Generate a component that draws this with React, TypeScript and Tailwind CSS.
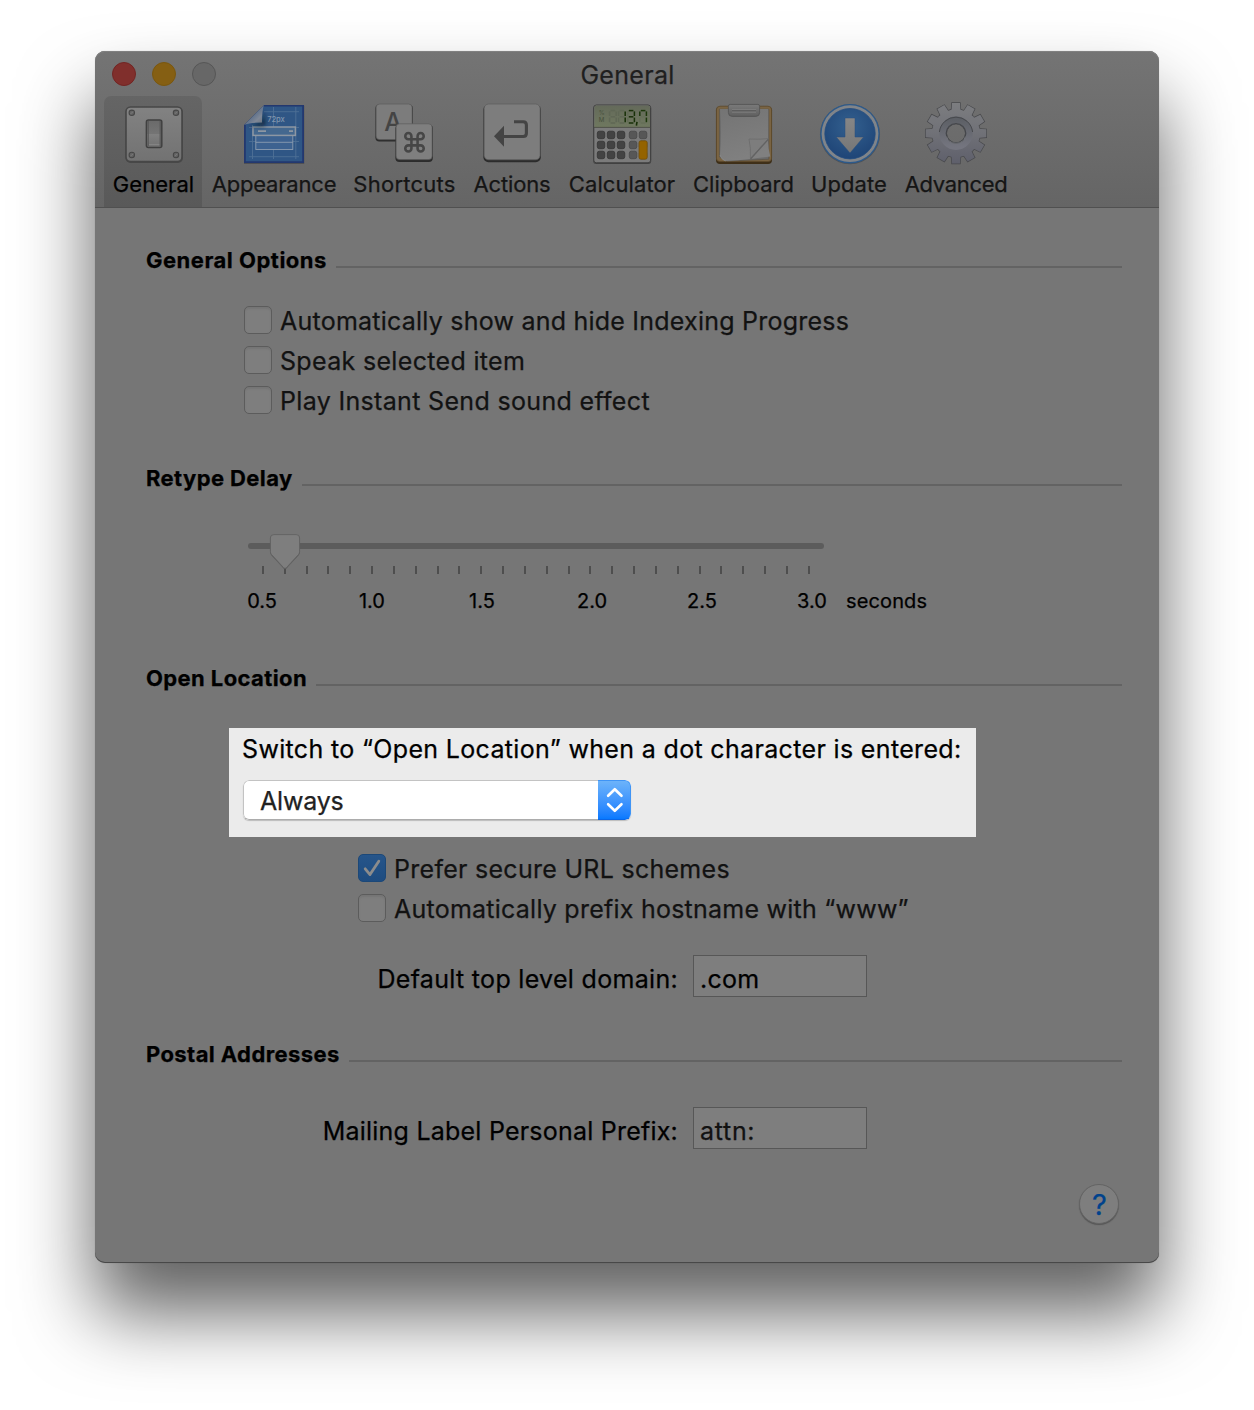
import React from "react";
import { Command } from "lucide-react";

function GeneralIcon() {
  const screws = [
    [10.8, 10.8],
    [55, 10.8],
    [10.8, 53],
    [55, 53],
  ];
  return (
    <svg width="64" height="64" viewBox="0 0 64 64">
      <defs>
        <linearGradient id="plate" x1="0" y1="0" x2="0" y2="1">
          <stop offset="0" stopColor="#828282" />
          <stop offset="1" stopColor="#727272" />
        </linearGradient>
        <linearGradient id="switchTop" x1="0" y1="0" x2="0" y2="1">
          <stop offset="0" stopColor="#6a6a6a" />
          <stop offset="0.5" stopColor="#747474" />
          <stop offset="0.52" stopColor="#808080" />
          <stop offset="1" stopColor="#707070" />
        </linearGradient>
      </defs>
      <rect x="4.5" y="5.5" width="57.5" height="55.5" rx="5" fill="#3c3c3c" opacity="0.6" />
      <rect x="5" y="5" width="56" height="54.5" rx="4.5" fill="url(#plate)" stroke="#474747" strokeWidth="1.6" />
      {screws.map(([x, y], i) => (
        <g key={i}>
          <circle cx={x} cy={y} r="2.7" fill="#646464" stroke="#474747" strokeWidth="1.1" />
          <path d={`M${x - 1.5} ${y + 1.2}L${x + 1.5} ${y - 1.2}`} stroke="#7e7e7e" strokeWidth="0.8" />
        </g>
      ))}
      <rect x="25.4" y="18" width="15.4" height="27.4" rx="2" fill="url(#switchTop)" stroke="#404040" strokeWidth="1.5" />
      <path d="M27.2 19v25M39.2 19v25" stroke="#585858" strokeWidth="1.2" />
      <path d="M28 42.6h10.4" stroke="#8a8a8a" strokeWidth="0.8" />
    </svg>
  );
}

function AppearanceIcon() {
  return (
    <svg width="64" height="64" viewBox="0 0 64 64">
      <defs>
        <linearGradient id="fold" x1="0" y1="0" x2="1" y2="1">
          <stop offset="0.35" stopColor="#4d6584" />
          <stop offset="0.7" stopColor="#7e8796" />
          <stop offset="1" stopColor="#6b727c" />
        </linearGradient>
        <filter id="foldShadow" x="-50%" y="-50%" width="200%" height="200%">
          <feGaussianBlur stdDeviation="2" />
        </filter>
        <clipPath id="sheet">
          <path d="M22 3H62V61H2V23Z" />
        </clipPath>
      </defs>
      <path d="M22 3.8H62.2V61.8H2V23Z" fill="#303238" opacity="0.6" />
      <path d="M22 3H62V61H2V23Z" fill="#23386f" />
      <path d="M22 4.6H60.2V59.2H3.8V23Z" fill="#2f5685" />
      <g stroke="#547599" strokeWidth="0.9" opacity="0.85">
        <path d="M10.5 23V57M31.5 5V57M53.8 5V57" />
        <path d="M22 9.7H57M7 25.5H57M7 39.5H57M7 54.7H57" />
      </g>
      <rect x="13.8" y="33.5" width="37" height="14" fill="#3d6290" stroke="#8a9cb0" strokeWidth="0.9" />
      <path d="M13.8 40.3H50.8" stroke="#8a9cb0" strokeWidth="0.9" />
      <rect x="11" y="25" width="42.4" height="8.4" fill="#44688f" stroke="#8d97a3" strokeWidth="1.5" />
      <path d="M16 29.2H24M47 29.2H51" stroke="#8d97a3" strokeWidth="1.8" />
      <text x="25.2" y="20.2" fontSize="7.6" fontWeight="500" fontFamily="Inter, sans-serif" fill="#8296ae" letterSpacing="-0.1">
        72px
      </text>
      <g clipPath="url(#sheet)">
        <path d="M21 8L23.5 21Q23.5 24 20 24L6 24L20 20Z" fill="#101a28" opacity="0.8" filter="url(#foldShadow)" />
      </g>
      <path d="M22 3Q20 8 20 20.5Q8 20.5 2 23Z" fill="url(#fold)" />
    </svg>
  );
}

function ShortcutsIcon() {
  return (
    <svg width="64" height="64" viewBox="0 0 64 64">
      <rect x="3.4" y="2.6" width="37.4" height="37" rx="4" fill="#2c2c2c" />
      <rect x="4.1" y="2" width="36" height="35.6" rx="3.6" fill="#7c7c7c" stroke="#5c5c5c" strokeWidth="0.7" />
      <text x="21.2" y="28.8" textAnchor="middle" fontSize="25" fontWeight="500" fontFamily="Inter, sans-serif" fill="#444">
        A
      </text>
      <rect x="23.4" y="22.6" width="37.4" height="37.4" rx="4" fill="#2c2c2c" />
      <rect x="24.1" y="21.8" width="36" height="35.8" rx="3.6" fill="#7f7f7f" stroke="#5c5c5c" strokeWidth="0.7" />
      <Command x="30.2" y="28" width="24.6" height="24.6" color="#464646" strokeWidth={2.5} />
    </svg>
  );
}

function ActionsIcon() {
  return (
    <svg width="64" height="64" viewBox="0 0 64 64">
      <rect x="3.4" y="2.8" width="57.4" height="57.4" rx="5" fill="#2c2c2c" />
      <rect x="4.1" y="2" width="56" height="55.8" rx="4.6" fill="#7d7d7d" stroke="#5c5c5c" strokeWidth="0.7" />
      <path d="M34 19.7H43.2Q46.4 19.7 46.4 23V31.2Q46.4 34.5 43.2 34.5H23" fill="none" stroke="#444" strokeWidth="3.1" />
      <path d="M14 34.3L24 23.8V44.8Z" fill="#444" />
    </svg>
  );
}

/* Segments run clockwise from the top bar, the middle bar is last. */
const SEGMENTS = [
  "M1 0H5.6",
  "M6.6 0.8V5.4",
  "M6.6 7V11.6",
  "M1 12.4H5.6",
  "M0 7V11.6",
  "M0 0.8V5.4",
  "M1 6.2H5.6",
];

function Digit({ x, on, color }: { x: number; on: number[]; color: string }) {
  return (
    <g transform={`translate(${x} 8.6)`} stroke={color} strokeWidth="1.5" fill="none">
      {on.map((s) => (
        <path key={s} d={SEGMENTS[s]} />
      ))}
    </g>
  );
}

function CalculatorIcon() {
  const rows = [29, 39, 49];
  return (
    <svg width="64" height="64" viewBox="0 0 64 64">
      <defs>
        <linearGradient id="lcd" x1="0" y1="0" x2="0" y2="1">
          <stop offset="0" stopColor="#646a5a" />
          <stop offset="1" stopColor="#6f785f" />
        </linearGradient>
      </defs>
      <rect x="3.2" y="3.4" width="58" height="58.6" rx="3" fill="#333" opacity="0.7" />
      <rect x="3.8" y="3" width="56.8" height="57.8" rx="2.6" fill="#7b7b7b" stroke="#3f3f3f" strokeWidth="1" />
      <path d="M4.4 25.2V5.6Q4.4 3.6 6.4 3.6H58Q60 3.6 60 5.6V25.2Z" fill="url(#lcd)" />
      <path d="M4 25.4H60.4" stroke="#4a4d44" strokeWidth="0.9" />
      <text x="8.8" y="12.6" fontSize="6" fontFamily="Inter, sans-serif" fill="#4a5440">
        %
      </text>
      <text x="8.8" y="20" fontSize="6.2" fontFamily="Inter, sans-serif" fill="#454f3b">
        M
      </text>
      <Digit x={19.6} on={[0, 1, 2, 3, 4, 5, 6]} color="#5f6755" />
      <Digit x={28.6} on={[0, 3, 4, 5, 6]} color="#5f6755" />
      <Digit x={28.6} on={[1, 2]} color="#183008" />
      <Digit x={37.8} on={[4, 5]} color="#626c55" />
      <Digit x={37.8} on={[0, 1, 2, 3, 6]} color="#183008" />
      <path d="M47 19.8L46.4 23.6" stroke="#183008" strokeWidth="1.6" />
      <Digit x={49.8} on={[3, 4, 6]} color="#666f58" />
      <Digit x={49.8} on={[0, 1, 2, 5]} color="#1d380c" />
      {rows.map((y) => (
        <g key={y}>
          {[7, 17, 27].map((x) => (
            <rect key={x} x={x + 0.3} y={y + 0.2} width="7.5" height="7.5" rx="2" fill="#434343" stroke="#303030" strokeWidth="0.7" />
          ))}
          {[39, 49].map((x) => (
            <rect key={x} x={x + 0.3} y={y + 0.2} width="7.5" height="7.5" rx="2" fill="#575757" stroke="#454545" strokeWidth="0.7" />
          ))}
        </g>
      ))}
      <rect x="49" y="38.8" width="8.2" height="18.4" rx="1.8" fill="#946300" stroke="#6f4c08" strokeWidth="0.7" />
    </svg>
  );
}

function ClipboardIcon() {
  return (
    <svg width="64" height="64" viewBox="0 0 64 64">
      <defs>
        <linearGradient id="paper" x1="0" y1="0" x2="0.3" y2="1">
          <stop offset="0" stopColor="#747474" />
          <stop offset="1" stopColor="#808080" />
        </linearGradient>
        <linearGradient id="clip" x1="0" y1="0" x2="0" y2="1">
          <stop offset="0" stopColor="#7a7a7a" />
          <stop offset="1" stopColor="#5f5f5f" />
        </linearGradient>
      </defs>
      <rect x="5" y="4.8" width="56" height="57.2" rx="4" fill="#3e2f18" />
      <rect x="5.4" y="4.2" width="55.2" height="55.4" rx="3.6" fill="#7a6443" stroke="#5d4a2c" strokeWidth="0.8" />
      <path d="M8.4 7.2H57.8V57.2L16 59.2L8.4 55Z" fill="#6b6b6b" stroke="#565048" strokeWidth="0.6" />
      <path d="M9 7H57.2V37Q56.6 44 59.3 54.5Q50 55.6 40 57Q27 58.5 14 58.9Q10.5 57.8 9 53Q11 30 9 7Z" fill="url(#paper)" />
      <path d="M9 53Q10 57.5 14.5 59" stroke="#8e8e8e" strokeWidth="0.7" fill="none" />
      <path d="M38 37Q48 37.6 57.3 36.6L39.4 56.6Q40 46 38 37Z" fill="#7d7d7d" stroke="#686868" strokeWidth="0.7" />
      <path d="M57.3 37.4L39.6 57" stroke="#626262" strokeWidth="1.2" />
      <path d="M17.4 4.2Q17.4 2.4 19.2 2.4H46.8Q48.6 2.4 48.6 4.2V10.6Q48.6 14.4 44.8 14.4H21.2Q17.4 14.4 17.4 10.6Z" fill="url(#clip)" stroke="#505050" strokeWidth="0.8" />
      <path d="M21 7.6H45M21 10.2H45" stroke="#828282" strokeWidth="0.8" />
      <path d="M21 8.6H45" stroke="#555" strokeWidth="0.7" />
    </svg>
  );
}

function UpdateIcon() {
  return (
    <svg width="64" height="64" viewBox="0 0 64 64">
      <defs>
        <radialGradient id="disc" cx="0.5" cy="0.35" r="0.65">
          <stop offset="0" stopColor="#33608f" />
          <stop offset="1" stopColor="#1f4577" />
        </radialGradient>
        <linearGradient id="arrow" x1="0" y1="0" x2="0" y2="1">
          <stop offset="0" stopColor="#868686" />
          <stop offset="1" stopColor="#777" />
        </linearGradient>
      </defs>
      <circle cx="33" cy="32.2" r="30" fill="#404347" opacity="0.6" />
      <circle cx="33" cy="31.7" r="29.7" fill="#2d5a8b" />
      <circle cx="33" cy="31.7" r="28.4" fill="#808489" />
      <circle cx="33" cy="31.7" r="25.2" fill="url(#disc)" stroke="#234c80" strokeWidth="0.8" />
      <path d="M28 16H38V35H46.6L33 51L19.2 35H28Z" fill="url(#arrow)" stroke="#284f7d" strokeWidth="0.5" />
    </svg>
  );
}

function AdvancedIcon() {
  const teeth = Array.from({ length: 12 }, (_, i) => i * 30);
  return (
    <svg width="64" height="64" viewBox="0 0 64 64">
      <defs>
        <linearGradient id="gear" gradientUnits="userSpaceOnUse" x1="0" y1="1" x2="0" y2="62">
          <stop offset="0" stopColor="#7c7d80" />
          <stop offset="0.5" stopColor="#707177" />
          <stop offset="1" stopColor="#5e5f6b" />
        </linearGradient>
        <linearGradient id="gearRing" x1="0" y1="0" x2="0" y2="1">
          <stop offset="0" stopColor="#5d6066" />
          <stop offset="1" stopColor="#74757f" />
        </linearGradient>
        <mask id="gearShape">
          {teeth.map((a) => (
            <path key={a} d="M27.4 10L28 1H36L36.6 10Z" fill="#fff" transform={`rotate(${a} 32 31.3)`} />
          ))}
          <circle cx="32" cy="31.3" r="24" fill="#fff" />
          <circle cx="32" cy="31.3" r="9.6" fill="#000" />
        </mask>
        <mask id="gearOutline">
          {teeth.map((a) => (
            <path key={a} d="M27.4 10L28 1H36L36.6 10Z" fill="#fff" stroke="#fff" strokeWidth="1.4" transform={`rotate(${a} 32 31.3)`} />
          ))}
          <circle cx="32" cy="31.3" r="24.7" fill="#fff" />
          <circle cx="32" cy="31.3" r="9" fill="#000" />
        </mask>
      </defs>
      <rect width="64" height="64" fill="#48494c" mask="url(#gearOutline)" />
      <rect width="64" height="64" fill="url(#gear)" mask="url(#gearShape)" />
      <circle cx="32" cy="31.3" r="13.4" fill="none" stroke="url(#gearRing)" strokeWidth="6.6" />
      <path d="M15.4 30A16.7 16.7 0 0 1 48.6 30" fill="none" stroke="#47494d" strokeWidth="1" />
      <circle cx="32" cy="31.3" r="9.8" fill="none" stroke="#44464a" strokeWidth="1.2" />
      <path d="M22.4 34.5A10.2 10.2 0 0 0 41.6 34.5" fill="none" stroke="#808186" strokeWidth="0.7" />
    </svg>
  );
}

const TABS = [
  { label: "General", width: "w-[98px]", tracking: "tracking-[0.05px] pl-px", icon: <GeneralIcon /> },
  { label: "Appearance", width: "w-[144px]", tracking: "tracking-[-0.19px]", icon: <AppearanceIcon /> },
  { label: "Shortcuts", width: "w-[116px]", tracking: "tracking-[0.25px] pl-px", icon: <ShortcutsIcon /> },
  { label: "Actions", width: "w-[100px]", tracking: "tracking-[-0.16px]", icon: <ActionsIcon /> },
  { label: "Calculator", width: "w-[120px]", tracking: "tracking-[0.09px]", icon: <CalculatorIcon /> },
  { label: "Clipboard", width: "w-[122px]", tracking: "tracking-[0.04px] pl-px", icon: <ClipboardIcon /> },
  { label: "Update", width: "w-[90px]", tracking: "tracking-[0.07px]", icon: <UpdateIcon /> },
  { label: "Advanced", width: "w-[124px]", tracking: "tracking-[-0.32px]", icon: <AdvancedIcon /> },
];

function Toolbar() {
  return (
    <header className="h-[157px] rounded-t-[10px] border-b border-[#505050] bg-linear-to-b from-[#747474] to-[#656565] shadow-[inset_0_1px_0_#808080]">
      <div className="grid h-[45px] grid-cols-[1fr_auto_1fr] items-center pt-px">
        <div className="flex gap-4 pl-[17px]">
          <span className="size-6 rounded-full border border-[#722523] bg-[#802f2c]" />
          <span className="size-6 rounded-full border border-[#7a570f] bg-[#855f13]" />
          <span className="size-6 rounded-full border border-[#565656] bg-[#676767]" />
        </div>
        <h1 className="pt-0.5 pl-px text-[25px] leading-10 tracking-[0.3px] text-[#1f1f1f]">General</h1>
      </div>
      <nav className="flex pl-[9px]">
        {TABS.map((tab, i) => (
          <div
            key={tab.label}
            className={`flex h-[111px] flex-col items-center rounded-t-[7px] pt-1.5 ${tab.width} ${
              i === 0 ? "bg-linear-to-b from-[#656565] to-[#595959] text-black" : "text-[#151515]"
            }`}
          >
            {tab.icon}
            <span className={`mt-1 text-[22px] leading-7 ${tab.tracking}`}>{tab.label}</span>
          </div>
        ))}
      </nav>
    </header>
  );
}

function Heading({ className, children }: { className: string; children: React.ReactNode }) {
  return (
    <div className={`flex h-7 pr-[37px] pl-[51px] ${className}`}>
      <h2 className="text-[22px] leading-7 font-bold whitespace-nowrap">{children}</h2>
      <div className="mt-5 ml-[9px] h-0.5 flex-1 bg-[#636363]" />
    </div>
  );
}

function CheckRow({ checked = false, tracking, children }: { checked?: boolean; tracking: string; children: React.ReactNode }) {
  return (
    <label className="flex h-10 items-center gap-2">
      {checked ? (
        <span className="flex size-7 items-center justify-center rounded-[5px] border border-[#1c4878] bg-linear-to-b from-[#26558a] to-[#1e4c80]">
          <svg width="26" height="26" viewBox="0 0 26 26" fill="none">
            <path d="M6.2 13.8L11 19.6L19.8 6.2" stroke="#8c8c8c" strokeWidth="2.8" strokeLinecap="round" strokeLinejoin="round" />
          </svg>
        </span>
      ) : (
        <span className="size-7 rounded-[5px] border border-[#5c5c5c] bg-[#7e7e7e] shadow-[inset_0_2px_2px_#757575]" />
      )}
      <span className={`pt-0.5 text-[25px] leading-9 whitespace-nowrap text-[#121212] ${tracking}`}>{children}</span>
    </label>
  );
}

function DelaySlider() {
  return (
    <div className="pl-[153px]">
      <div className="relative h-[42px] w-[576px] pt-[9px]">
        <div className="h-1.5 rounded-full bg-[#5c5c5c]" />
        <div className="mt-[17px] ml-3.5 flex w-[548px] justify-between">
          {Array.from({ length: 26 }, (_, i) => (
            <span key={i} className="h-2 w-0.5 bg-[#4e4e4e]" />
          ))}
        </div>
        <svg className="absolute top-0 left-[21px]" width="32" height="38" viewBox="0 0 32 38">
          <path
            d="M4.5 1H27.5Q31 1 31 4.5V18Q31 19.8 29.8 21.2L17.6 34.4Q16 36.2 14.4 34.4L2.2 21.2Q1 19.8 1 18V4.5Q1 1 4.5 1Z"
            fill="#555"
            opacity="0.7"
          />
          <path
            d="M4.8 0.6H27.2Q30.6 0.6 30.6 4V17.6Q30.6 19.2 29.5 20.5L17.4 33.7Q16 35.2 14.6 33.7L2.5 20.5Q1.4 19.2 1.4 17.6V4Q1.4 0.6 4.8 0.6Z"
            fill="#7e7e7e"
            stroke="#5f5f5f"
            strokeWidth="0.8"
          />
        </svg>
      </div>
      <div className="mt-2.5 flex text-[20px] leading-[30px]">
        <div className="-ml-px flex w-[580px] justify-between">
          {["0.5", "1.0", "1.5", "2.0", "2.5", "3.0"].map((n) => (
            <span key={n} className="w-[30px] text-center whitespace-nowrap">
              {n}
            </span>
          ))}
        </div>
        <span className="ml-[19px] tracking-[0.13px]">seconds</span>
      </div>
    </div>
  );
}

function LocationSelect() {
  return (
    <section className="mt-9 ml-[134px] h-[109px] w-[747px] bg-[#ebebeb] pt-px pl-[13px]">
      <p className="text-[25px] leading-[41px] tracking-[0.34px] whitespace-nowrap">
        Switch to “Open Location” when a dot character is entered:
      </p>
      <div className="mt-2.5 ml-px flex h-10 w-[388px] overflow-hidden rounded-[6px] bg-white shadow-[0_1px_1px_rgba(0,0,0,0.2)]">
        <div className="flex-1 rounded-l-[6px] border border-r-0 border-[#c3c3c3] border-b-[#acacac] pt-px pl-4 text-[25px] leading-[38px] tracking-[-0.2px] text-[#222]">
          Always
        </div>
        <div className="flex w-[33px] items-center justify-center rounded-r-[6px] border border-l-0 border-[#3f94f5] border-b-[#0a66e8] bg-linear-to-b from-[#6cb3fa] to-[#0679ff]">
          <svg width="19" height="26" viewBox="0 0 18 26" fill="none" stroke="#fff" strokeWidth="2.6" strokeLinecap="round" strokeLinejoin="round">
            <path d="M2.6 8.8L9.3 2.2L16 8.8" />
            <path d="M2.6 17.2L9.3 23.8L16 17.2" />
          </svg>
        </div>
      </div>
    </section>
  );
}

function FieldRow({ className, label, value, labelTracking, valueClass }: { className: string; label: string; value: string; labelTracking: string; valueClass: string }) {
  return (
    <div className={`flex h-[42px] gap-[15px] ${className}`}>
      <span className={`w-[583px] pt-[3px] text-right text-[25px] leading-[42px] whitespace-nowrap ${labelTracking}`}>{label}</span>
      <div className={`h-[42px] w-[174px] border border-[#575757] bg-[#7e7e7e] pt-[3px] pl-1.5 text-[25px] leading-10 ${valueClass}`}>{value}</div>
    </div>
  );
}

export default function App() {
  return (
    <div className="h-[1410px] w-[1254px] overflow-hidden bg-white pt-[51px] pl-[95px] font-[Inter,sans-serif] text-black [-webkit-text-stroke:0.25px_currentColor]">
      <main className="h-[1212px] w-[1064px] rounded-[10px] bg-[#767676] shadow-[0_0_1px_rgba(0,0,0,0.3),0_50px_76px_rgba(0,0,0,0.62),inset_0_-1px_0_#484848]">
        <Toolbar />

        <Heading className="mt-[38px] tracking-[0.5px]">General Options</Heading>
        <div className="mt-[26px] pl-[149px]">
          <CheckRow tracking="tracking-[0.23px]">Automatically show and hide Indexing Progress</CheckRow>
          <CheckRow tracking="tracking-[0.33px]">Speak selected item</CheckRow>
          <CheckRow tracking="tracking-[0.33px]">Play Instant Send sound effect</CheckRow>
        </div>

        <Heading className="mt-11 mb-[42px] tracking-[0.4px]">Retype Delay</Heading>
        <DelaySlider />

        <Heading className="mt-12 tracking-[0.4px]">Open Location</Heading>
        <LocationSelect />
        <div className="mt-[11px] pl-[263px]">
          <CheckRow checked tracking="tracking-[0.28px]">
            Prefer secure URL schemes
          </CheckRow>
          <CheckRow tracking="tracking-[0.24px]">Automatically prefix hostname with “www”</CheckRow>
        </div>
        <FieldRow
          className="mt-[27px]"
          label="Default top level domain:"
          value=".com"
          labelTracking="tracking-[0.31px]"
          valueClass="tracking-[0.3px] text-black"
        />

        <Heading className="mt-[43px] tracking-[0.4px]">Postal Addresses</Heading>
        <FieldRow
          className="mt-[39px]"
          label="Mailing Label Personal Prefix:"
          value="attn:"
          labelTracking="tracking-[0.22px]"
          valueClass="tracking-[0.7px] text-[#121212]"
        />

        <div className="mt-[35px] flex justify-end pr-10">
          <button className="size-10 rounded-full border border-[#646464] bg-[#7e7e7e] pt-px pl-px text-[29px] leading-[38px] text-[#00428c] shadow-[0_1px_1px_#555]">?</button>
        </div>
      </main>
    </div>
  );
}
